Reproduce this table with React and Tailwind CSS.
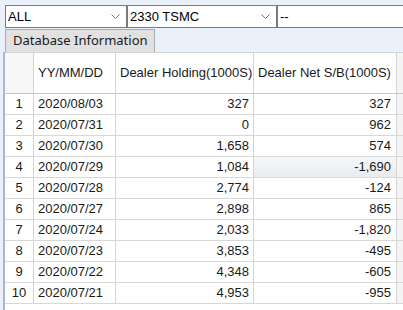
import React from 'react';

const rows = [
    ['2020/08/03', '327', '327'],
    ['2020/07/31', '0', '962'],
    ['2020/07/30', '1,658', '574'],
    ['2020/07/29', '1,084', '-1,690'],
    ['2020/07/28', '2,774', '-124'],
    ['2020/07/27', '2,898', '865'],
    ['2020/07/24', '2,033', '-1,820'],
    ['2020/07/23', '3,853', '-495'],
    ['2020/07/22', '4,348', '-605'],
    ['2020/07/21', '4,953', '-955'],
];

function Chevron() {
    return (
        <svg width="9" height="5" viewBox="0 0 9 5" className="shrink-0">
            <path d="M0.5 0.5 L4.5 4.5 L8.5 0.5" fill="none" stroke="#707070" strokeWidth="1" />
        </svg>
    );
}

function Combo({ value, width, arrow = true }) {
    return (
        <div className={`${width} h-[23px] bg-white border border-[#7a7a7a] flex items-center pl-[2px] pr-[6px] shrink-0`}>
            <span className="flex-1 text-[13px] text-black leading-none">{value}</span>
            {arrow && <Chevron />}
        </div>
    );
}

export default function App() {
    return (
        <div className="w-[403px] h-[310px] overflow-hidden bg-[#eaf1fa] font-['Liberation_Sans',Arial,sans-serif]">
            {/* combo row */}
            <div className="flex pt-[5px] pl-[5px]">
                <Combo value="ALL" width="w-[122px]" />
                <div className="w-[1px]" />
                <Combo value="2330 TSMC" width="w-[150px]" />
                <div className="w-[4px]" />
                <Combo value="--" width="w-[130px]" arrow={false} />
            </div>

            {/* tab */}
            <div className="ml-[5px] mt-[1px] w-[150px] h-[23px] bg-[#e1e1e1] border border-[#acacac] border-b-0 flex items-center pl-[7px] font-['Noto_Sans',sans-serif] text-[13px] text-[#1a1a1a]">
                Database Information
            </div>

            {/* grid */}
            <div className="ml-[3px] bg-white border-l-2 border-[#a8b8d4] h-[258px] flex flex-col">
                <div className="flex h-[42px] border-t border-[#d4d4d4] border-b border-b-[#c8c8c8] text-[13px] text-[#1a1a1a]">
                    <div className="w-[29px] border-r border-[#d4d4d4] bg-[#f7f7f7]" />
                    <div className="w-[82px] border-r border-[#d4d4d4] flex items-center pl-[4px]">YY/MM/DD</div>
                    <div className="w-[138px] border-r border-[#d4d4d4] flex items-center pl-[4px] whitespace-nowrap">Dealer Holding(1000S)</div>
                    <div className="w-[143px] border-r border-[#d4d4d4] flex items-center pl-[4px] whitespace-nowrap">Dealer Net S/B(1000S)</div>
                    <div className="flex-1 bg-[#f4f4f4]" />
                </div>
                {rows.map((r, i) => (
                    <div key={i} className="flex h-[21px] border-b border-[#d8d8d8] text-[13px] text-[#1a1a1a]">
                        <div className="w-[29px] border-r border-[#d4d4d4] flex items-center justify-center">{i + 1}</div>
                        <div className="w-[82px] border-r border-[#d4d4d4] flex items-center pl-[4px]">{r[0]}</div>
                        <div className="w-[138px] border-r border-[#d4d4d4] flex items-center justify-end pr-[4px]">{r[1]}</div>
                        <div className={`w-[143px] border-r border-[#d4d4d4] flex items-center justify-end pr-[5px] ${i === 3 ? 'bg-gradient-to-b from-[#f6f7f9] to-[#e9ebef]' : ''}`}>{r[2]}</div>
                        <div className="flex-1 bg-[#f4f4f4]" />
                    </div>
                ))}
                <div className="flex-1" />
            </div>
        </div>
    );
}
